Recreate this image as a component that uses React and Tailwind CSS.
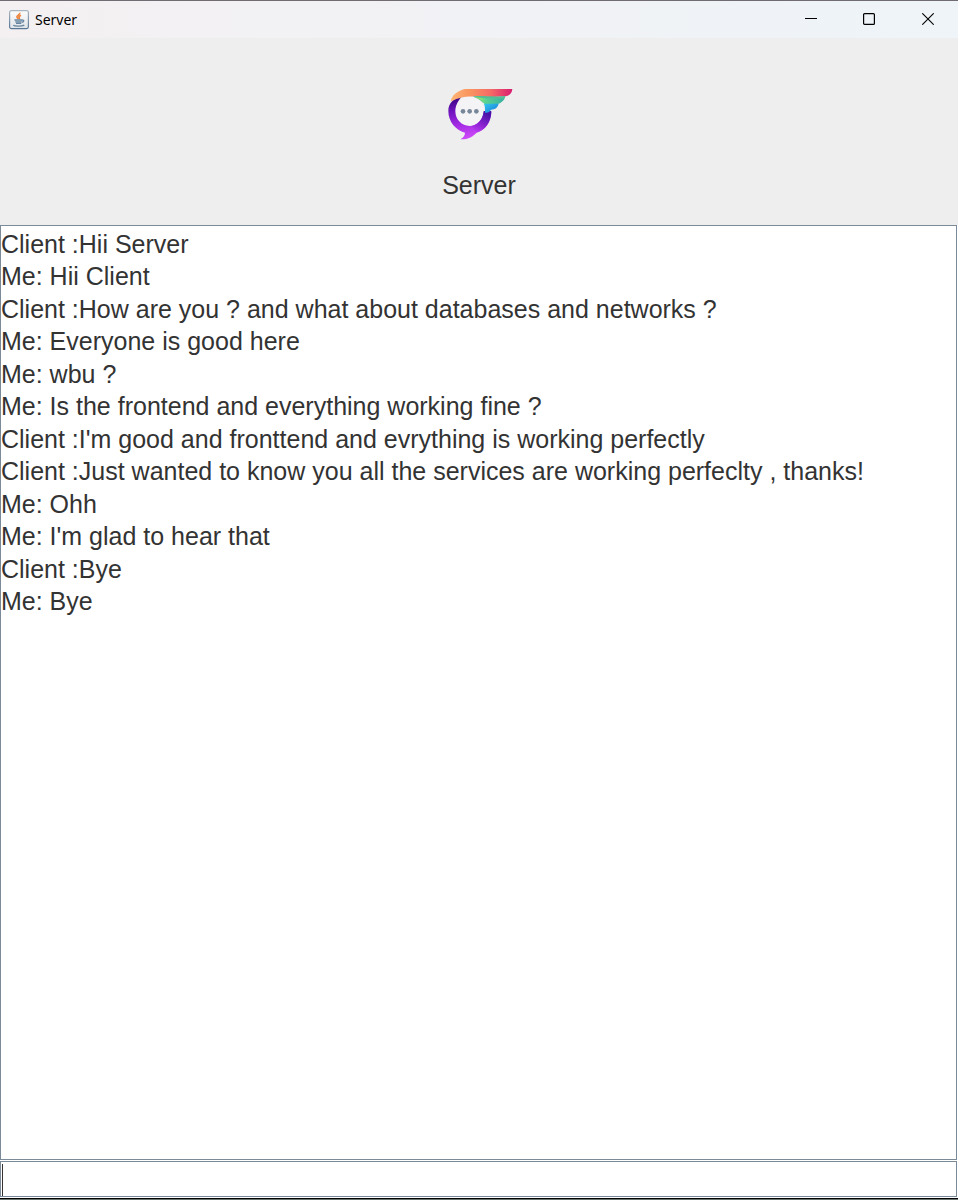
const messages = [
  "Client :Hii Server",
  "Me: Hii Client",
  "Client :How are you ? and what about databases and networks ?",
  "Me: Everyone is good here",
  "Me: wbu ?",
  "Me: Is the frontend and everything working fine ?",
  "Client :I'm good and fronttend and evrything is working perfectly",
  "Client :Just wanted to know you all the services are working perfeclty , thanks!",
  "Me: Ohh",
  "Me: I'm glad to hear that",
  "Client :Bye",
  "Me: Bye",
];

function JavaIcon() {
  return (
    <svg width="20" height="20" viewBox="0 0 20 20" aria-hidden="true">
      <defs>
        <linearGradient id="tile" x1="0" y1="0" x2="0" y2="1">
          <stop offset="0" stopColor="#fdfdfd" />
          <stop offset="1" stopColor="#dfe3e7" />
        </linearGradient>
        <linearGradient id="rim" x1="0" y1="0" x2="0" y2="1">
          <stop offset="0" stopColor="#a9b6c1" />
          <stop offset="1" stopColor="#587796" />
        </linearGradient>
      </defs>
      <rect x="0.6" y="0.6" width="18.8" height="18" rx="1.8" fill="url(#tile)" stroke="url(#rim)" strokeWidth="1.2" />
      <path d="M10.600 2.800c1 1.700-3.200 2.700-2.700 4.200.2.700 1.100 1.200 1.400 2M12 5.300c-1.700.7-2.400 1.400-1.800 2.300.4.500.3.900-.2 1.500" fill="none" stroke="#ee8742" strokeWidth="1.700" />
      <path d="M5.500 10h7.800M6.200 11.800h6.600M7 13.400h5.300M13.200 10.200c2.200-.5 2 1.600-.2 2.100" fill="none" stroke="#64849f" strokeWidth="1.300" />
      <path d="M4.300 15.200c1.500 1.300 8.900 1.300 11-.1" fill="none" stroke="#64849f" strokeWidth="1.400" />
    </svg>
  );
}

function Logo() {
  return (
    <svg width="88" height="75" viewBox="0 0 264 225" role="img" aria-label="Chat logo">
      <defs>
        <linearGradient id="ring" x1="0.200" y1="0" x2="0.400" y2="1">
          <stop offset="0" stopColor="#35057c" />
          <stop offset="0.300" stopColor="#6d14bd" />
          <stop offset="0.650" stopColor="#a42be4" />
          <stop offset="1" stopColor="#cf4bfa" />
        </linearGradient>
        <linearGradient id="ringRight" x1="0.500" y1="0" x2="0" y2="1">
          <stop offset="0" stopColor="#4a12a8" />
          <stop offset="0.500" stopColor="#8a22d0" />
          <stop offset="1" stopColor="#a42be4" stopOpacity="0" />
        </linearGradient>
        <linearGradient id="top" x1="0" y1="0" x2="1" y2="0">
          <stop offset="0" stopColor="#fcb678" />
          <stop offset="0.300" stopColor="#fa955f" />
          <stop offset="0.650" stopColor="#f56a66" />
          <stop offset="1" stopColor="#d91c70" />
        </linearGradient>
        <linearGradient id="green" x1="0" y1="0" x2="1" y2="0">
          <stop offset="0" stopColor="#c8f04a" />
          <stop offset="0.350" stopColor="#5bd392" />
          <stop offset="1" stopColor="#37b0a2" />
        </linearGradient>
        <linearGradient id="blue" x1="0" y1="0" x2="1" y2="1">
          <stop offset="0" stopColor="#31c9ee" />
          <stop offset="1" stopColor="#1874d6" />
        </linearGradient>
      </defs>
      <circle cx="104" cy="109" r="44" fill="#f4f4f6" />
      <path d="M81 64C57 69 40 84 40 108c0 32 22 58 50 65 0 8-5 15-14 20 23 1 38-9 49-20 25-6 43-30 44-61h-23c-2 22-20 41-42 41-24 0-43-20-43-44 0-18 9-33 20-45z" fill="url(#ring)" />
      <path d="M146 108h23c0 30-18 58-44 65l-15-21c20-2 34-20 36-44z" fill="url(#ringRight)" />
      <path d="M47 79c3-18 19-31 43-37h142c-1 12-8 20-20 22l-70 4c-29-5-54-8-95 11z" fill="url(#top)" />
      <path d="M114 65c14-5 64 2 97-2-1 11-8 17-20 18l-47 2c-7-8-16-14-30-18z" fill="#54bd96" />
      <path d="M120 67c22 3 53 5 87 4-5 12-16 17-32 18h-26c-5-10-12-17-29-22z" fill="url(#green)" />
      <path d="M147 86h44c-3 12-10 17-23 18-4 7-8 10-18 9 1-10 0-19-3-27z" fill="url(#blue)" />
      <g fill="#78869a">
        <circle cx="84" cy="109" r="7" />
        <circle cx="104" cy="109" r="7" />
        <circle cx="124" cy="109" r="7" />
      </g>
    </svg>
  );
}

function TitleBar() {
  return (
    <header className="flex h-[38px] items-stretch border-t border-[#706c72] bg-linear-to-r from-[#f4f0f2] to-[#eef4f8] text-black">
      <div className="flex flex-1 items-center gap-[6px] pl-[9px]">
        <JavaIcon />
        <h1 className="font-['Noto_Sans',sans-serif] text-[14px] leading-5">Server</h1>
      </div>
      <button type="button" aria-label="Minimize" className="flex w-[58px] items-center justify-center">
        <svg width="12" height="12" viewBox="0 0 12 12"><path d="M0 4.500h12" stroke="black" /></svg>
      </button>
      <button type="button" aria-label="Maximize" className="flex w-[58px] items-center justify-center pb-px">
        <svg width="12" height="12" viewBox="0 0 12 12"><rect x="0.600" y="0.600" width="10.800" height="10.800" rx="1" fill="none" stroke="black" strokeWidth="1.200" /></svg>
      </button>
      <button type="button" aria-label="Close" className="flex w-[60px] items-center justify-center pb-px">
        <svg width="12" height="12" viewBox="0 0 12 12"><path d="M0.300 0.300l11.400 11.400M11.700 0.300L0.300 11.700" stroke="black" strokeWidth="1.100" /></svg>
      </button>
    </header>
  );
}

export default function App() {
  return (
    <div className="flex min-h-screen flex-col bg-white font-['Liberation_Sans',Arial,sans-serif] text-[25px] leading-8 text-[#333333]">
      <TitleBar />
      <section className="flex flex-col items-center bg-[#eeeeee] pt-[37px] pb-6">
        <Logo />
        <h2 className="mt-[19px]">Server</h2>
      </section>
      <main className="mr-px flex flex-1 flex-col">
        <ul className="flex-1 border border-[#7a8a99] pt-[2px]">
          {messages.map((message, i) => (
            <li key={i} className="even:pb-px">{message}</li>
          ))}
        </ul>
        <form className="relative mt-px flex" onSubmit={(e) => e.preventDefault()}>
          <input
            type="text"
            aria-label="Message"
            autoComplete="off"
            className="h-9 w-full border border-[#7a8a99] bg-white px-px outline-none"
          />
          <span aria-hidden="true" className="absolute top-[3px] bottom-px left-[2px] w-px bg-[#333333]" />
        </form>
      </main>
      <footer className="mt-px h-[2px] border-t border-black bg-[#6b756f]" />
    </div>
  );
}
